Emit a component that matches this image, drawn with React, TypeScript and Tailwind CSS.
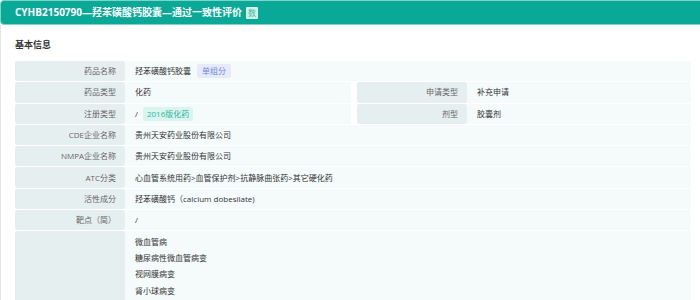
import React from 'react';

const font = 'font-["Open_Sans","Noto_Sans_CJK_SC",sans-serif]';

const Label: React.FC<{ children?: React.ReactNode; className?: string }> = ({ children, className = '' }) => (
  <div className={`bg-[#e6eff0] rounded-[2px] flex items-center justify-end pr-[9px] text-[#666] ${className}`}>
    {children}
  </div>
);

const Value: React.FC<{ children?: React.ReactNode; className?: string }> = ({ children, className = '' }) => (
  <div className={`bg-[#f5fbfb] flex items-center pl-[10px] text-[#333] ${className}`}>{children}</div>
);

const fullRows: [string, React.ReactNode][] = [
  ['CDE企业名称', '贵州天安药业股份有限公司'],
  ['NMPA企业名称', '贵州天安药业股份有限公司'],
  ['ATC分类', '心血管系统用药>血管保护剂>抗静脉曲张药>其它硬化药'],
  ['活性成分', '羟苯磺酸钙（calcium dobesilate)'],
  ['靶点（简）', '/'],
];

const indications = ['微血管病', '糖尿病性微血管病变', '视网膜病变', '肾小球病变'];

export default function App() {
  return (
    <div className={`w-[700px] h-[300px] overflow-hidden bg-white ${font}`}>
      <div className="w-[712px] h-[25px] bg-[#0aa997] border border-[#7fd4c9] rounded-[4px] flex items-center pl-[14px] text-white text-[10px] font-bold">
        <span>CYHB2150790—羟苯磺酸钙胶囊—通过一致性评价</span>
        <span className="ml-[4px] bg-[#d3efe6] text-[#3fbba5] text-[8px] font-normal px-[2px] leading-[12px] rounded-[1px]">数</span>
      </div>
      <div className="border-l border-[#e2e6e6] h-[275px] pl-[14px]">
        <div className="pt-[13px] h-[36px] text-[9px] font-bold text-[#333]">基本信息</div>
        <div className="w-[676px] text-[8px] flex flex-col gap-y-px">
          <div className="grid grid-cols-[110px_566px] h-[20.3px]">
            <Label>药品名称</Label>
            <Value>
              羟苯磺酸钙胶囊
              <span className="ml-[6px] bg-[#e6ebfa] text-[#7387d8] px-[5px] leading-[14px] rounded-[2px]">单组分</span>
            </Value>
          </div>
          <div className="grid grid-cols-[110px_226px_6px_110px_224px] h-[20.3px]">
            <Label>药品类型</Label>
            <Value>化药</Value>
            <div />
            <Label>申请类型</Label>
            <Value>补充申请</Value>
          </div>
          <div className="grid grid-cols-[110px_226px_6px_110px_224px] h-[20.3px]">
            <Label>注册类型</Label>
            <Value>
              /
              <span className="ml-[5px] bg-[#daf4ee] text-[#2db79c] px-[4px] leading-[14px] rounded-[2px]">2016版化药</span>
            </Value>
            <div />
            <Label>剂型</Label>
            <Value>胶囊剂</Value>
          </div>
          {fullRows.map(([k, v]) => (
            <div key={k} className="grid grid-cols-[110px_566px] h-[20.3px]">
              <Label>{k}</Label>
              <Value>{v}</Value>
            </div>
          ))}
          <div className="grid grid-cols-[110px_566px] h-[80px]">
            <Label />
            <div className="bg-[#f5fbfb] pl-[10px] pt-[2px] text-[#333] flex flex-col">
              {indications.map((t) => (
                <div key={t} className="h-[16.4px] flex items-center">{t}</div>
              ))}
            </div>
          </div>
        </div>
      </div>
    </div>
  );
}
